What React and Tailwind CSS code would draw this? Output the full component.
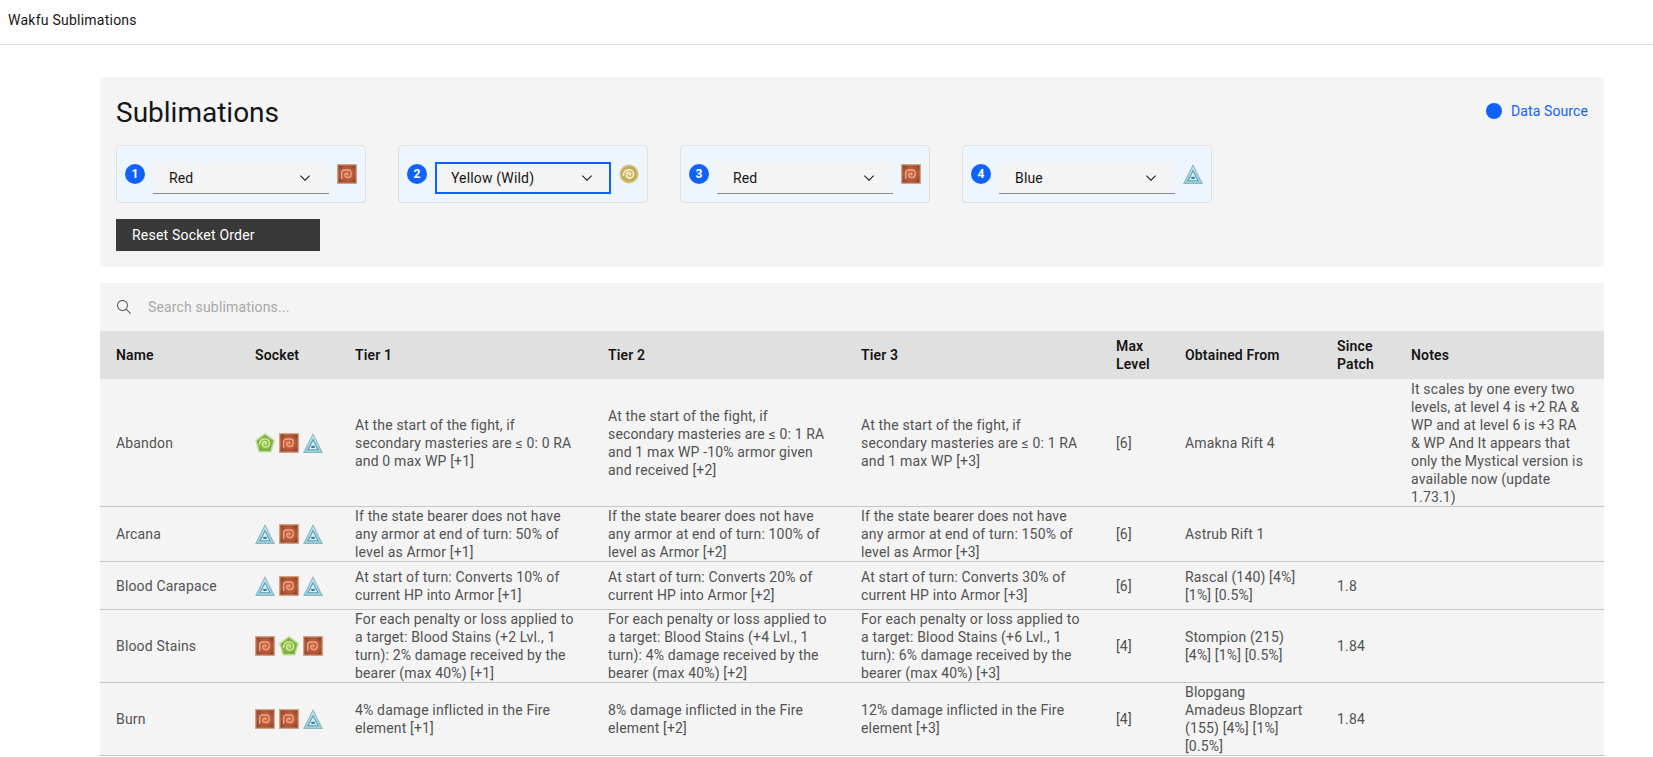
import React, { useId } from 'react';

const spiral = 'M10.400 10.800c1.100-.1 1.400-1.800.1-2.200-1.700-.4-3.200 1-3 2.700.1 1.800 1.800 3 3.600 2.800 2.200-.2 3.600-2.200 3.400-4.500C14.300 7.300 12.100 5.600 9.500 5.800 6.400 6 4.300 8.500 4.500 11.400';

const RedIcon = () => {
  const id = useId();
  return (
    <svg width="20" height="20" viewBox="0 0 20 20" className="shrink-0">
      <defs>
        <radialGradient id={id} cx="0.5" cy="0.5" r="0.72">
          <stop offset="0" stopColor="#d46a45" />
          <stop offset="0.6" stopColor="#b0553a" />
          <stop offset="1" stopColor="#7a3522" />
        </radialGradient>
      </defs>
      <rect width="20" height="20" fill="#d6a27c" />
      <rect x="1.400" y="1.400" width="17.200" height="17.200" fill={`url(#${id})`} />
      <path d="M10.200 10.800c1-.2 1-1.700-.2-1.700-1.400 0-2.300 1-2.300 2 0 1.500 1 2.400 2.500 2.400h1c2 0 3-1 3-3V9c0-2-1-3-3-3H8C6 6 4.700 7 4.700 9v5.500" fill="none" stroke="#eeaa82" strokeWidth="1.300" strokeLinecap="round" />
    </svg>
  );
};

const GreenIcon = () => {
  const id = useId();
  return (
    <svg width="20" height="20" viewBox="0 0 20 20" className="shrink-0">
      <defs>
        <radialGradient id={id} cx="0.5" cy="0.55" r="0.6">
          <stop offset="0" stopColor="#a5d05c" />
          <stop offset="1" stopColor="#6aa534" />
        </radialGradient>
      </defs>
      <polygon points="10,0 20,7.300 16.200,19.500 3.800,19.500 0,7.300" fill="#c3da96" />
      <polygon points="10,1.800 18.200,7.900 15.200,18 4.800,18 1.800,7.900" fill={`url(#${id})`} />
      <path d={spiral} fill="none" stroke="#d9efac" strokeWidth="1.300" strokeLinecap="round" />
    </svg>
  );
};

const BlueIcon = () => {
  const id = useId();
  return (
    <svg width="20" height="20" viewBox="0 0 20 20" className="shrink-0">
      <defs>
        <linearGradient id={id} x1="0" y1="0" x2="0" y2="1">
          <stop offset="0" stopColor="#c6e8f0" />
          <stop offset="1" stopColor="#98cede" />
        </linearGradient>
      </defs>
      <polygon points="10,0 20,20 0,20" fill="#8fb4be" />
      <polygon points="10,2.200 18.300,19 1.700,19" fill={`url(#${id})`} />
      <polygon points="10,6.800 15,16.700 5,16.700" fill="#d8f0f5" stroke="#5a9fb5" strokeWidth="1.100" />
      <rect x="8.300" y="12.800" width="3.400" height="2.200" fill="#3a7f98" />
    </svg>
  );
};

const YellowIcon = () => {
  const id = useId();
  return (
    <svg width="20" height="20" viewBox="0 0 20 20" className="shrink-0">
      <defs>
        <radialGradient id={id} cx="0.5" cy="0.5" r="0.5">
          <stop offset="0" stopColor="#d6c473" />
          <stop offset="0.74" stopColor="#bfaa55" />
          <stop offset="1" stopColor="#efe8c2" />
        </radialGradient>
      </defs>
      <circle cx="10" cy="10" r="10" fill={`url(#${id})`} />
      <path d={spiral} fill="none" stroke="#f6f0cf" strokeWidth="1.600" strokeLinecap="round" />
    </svg>
  );
};

const icons = { red: RedIcon, green: GreenIcon, blue: BlueIcon, yellow: YellowIcon };

const Chevron = () => (
  <svg width="16" height="16" viewBox="0 0 16 16" fill="#161616" className="absolute right-4 top-2 pointer-events-none">
    <path d="M8 11L3 6l.7-.7L8 9.600l4.300-4.300.7.700z" />
  </svg>
);

const sockets = [
  { n: 1, label: 'Red', icon: 'red' },
  { n: 2, label: 'Yellow (Wild)', icon: 'yellow', focused: true },
  { n: 3, label: 'Red', icon: 'red' },
  { n: 4, label: 'Blue', icon: 'blue' },
];

const rows = [
  {
    name: 'Abandon',
    height: 'h-[128px]',
    socket: ['green', 'red', 'blue'],
    t1: 'At the start of the fight, if\nsecondary masteries are ≤ 0: 0 RA\nand 0 max WP [+1]',
    t2: 'At the start of the fight, if\nsecondary masteries are ≤ 0: 1 RA\nand 1 max WP -10% armor given\nand received [+2]',
    t3: 'At the start of the fight, if\nsecondary masteries are ≤ 0: 1 RA\nand 1 max WP [+3]',
    max: '[6]',
    from: 'Amakna Rift 4',
    since: '',
    notes: 'It scales by one every two\nlevels, at level 4 is +2 RA &\nWP and at level 6 is +3 RA\n& WP And It appears that\nonly the Mystical version is\navailable now (update\n1.73.1)',
  },
  {
    name: 'Arcana',
    socket: ['blue', 'red', 'blue'],
    t1: 'If the state bearer does not have\nany armor at end of turn: 50% of\nlevel as Armor [+1]',
    t2: 'If the state bearer does not have\nany armor at end of turn: 100% of\nlevel as Armor [+2]',
    t3: 'If the state bearer does not have\nany armor at end of turn: 150% of\nlevel as Armor [+3]',
    max: '[6]',
    from: 'Astrub Rift 1',
    since: '',
    notes: '',
  },
  {
    name: 'Blood Carapace',
    socket: ['blue', 'red', 'blue'],
    t1: 'At start of turn: Converts 10% of\ncurrent HP into Armor [+1]',
    t2: 'At start of turn: Converts 20% of\ncurrent HP into Armor [+2]',
    t3: 'At start of turn: Converts 30% of\ncurrent HP into Armor [+3]',
    max: '[6]',
    from: 'Rascal (140) [4%]\n[1%] [0.5%]',
    since: '1.8',
    notes: '',
  },
  {
    name: 'Blood Stains',
    socket: ['red', 'green', 'red'],
    t1: 'For each penalty or loss applied to\na target: Blood Stains (+2 Lvl., 1\nturn): 2% damage received by the\nbearer (max 40%) [+1]',
    t2: 'For each penalty or loss applied to\na target: Blood Stains (+4 Lvl., 1\nturn): 4% damage received by the\nbearer (max 40%) [+2]',
    t3: 'For each penalty or loss applied to\na target: Blood Stains (+6 Lvl., 1\nturn): 6% damage received by the\nbearer (max 40%) [+3]',
    max: '[4]',
    from: 'Stompion (215)\n[4%] [1%] [0.5%]',
    since: '1.84',
    notes: '',
  },
  {
    name: 'Burn',
    socket: ['red', 'red', 'blue'],
    t1: '4% damage inflicted in the Fire\nelement [+1]',
    t2: '8% damage inflicted in the Fire\nelement [+2]',
    t3: '12% damage inflicted in the Fire\nelement [+3]',
    max: '[4]',
    from: 'Blopgang\nAmadeus Blopzart\n(155) [4%] [1%]\n[0.5%]',
    since: '1.84',
    notes: '',
  },
];

const SocketBox = ({ n, label, icon, focused }) => {
  const Icon = icons[icon];
  return (
    <div className="w-[250px] h-[58px] flex items-center gap-2 px-2 bg-[#edf5ff] border border-[#e0e0e0] rounded">
      <span className="w-5 h-5 shrink-0 rounded-full bg-[#0f62fe] text-white text-xs font-bold flex items-center justify-center">{n}</span>
      <div className="relative w-[176px] h-8 mt-2 shrink-0">
        <select
          defaultValue={label}
          className={
            focused
              ? 'appearance-none w-full h-full pl-4 bg-[#f4f4f4] text-[#161616] text-sm tracking-[0.16px] outline-2 -outline-offset-2 outline-[#0f62fe]'
              : 'appearance-none w-full h-full pl-4 bg-[#f4f4f4] text-[#161616] text-sm tracking-[0.16px] border-b border-[#8d8d8d]'
          }
        >
          <option>Red</option>
          <option>Green</option>
          <option>Blue</option>
          <option>Yellow (Wild)</option>
        </select>
        <Chevron />
      </div>
      <Icon />
    </div>
  );
};

const Cell = ({ children }) => (
  <td className="px-4 py-0 align-middle whitespace-pre-line border-b border-[#c6c6c6]">{children}</td>
);

export default function App() {
  return (
    <div className="h-screen overflow-hidden bg-white font-['Roboto',sans-serif] text-[#161616]">
      <header className="h-[45px] flex items-center px-2 border-b border-[#e0e0e0] text-sm tracking-[0.24px] pb-1">Wakfu Sublimations</header>
      <main className="ml-[100px] mr-[49px] mt-8">
        <section className="bg-[#f4f4f4] rounded p-4 mb-4">
          <div className="flex justify-between items-center mb-4 h-9">
            <h1 className="text-[28px] leading-9 font-normal mt-1">Sublimations</h1>
            <a className="flex items-center gap-[9px] text-sm text-[#0f62fe] tracking-[0.1px]">
              <span className="w-4 h-4 rounded-full bg-[#0f62fe]" />
              Data Source
            </a>
          </div>
          <div className="flex gap-8 mb-4">
            {sockets.map((s) => (
              <SocketBox key={s.n} {...s} />
            ))}
          </div>
          <button className="block w-[204px] h-8 pl-4 text-left bg-[#393939] text-white text-sm tracking-[0.2px]">Reset Socket Order</button>
        </section>

        <section className="bg-[#f4f4f4]">
          <div className="h-12 flex items-center gap-4 pl-4">
            <svg width="16" height="16" viewBox="0 0 16 16" fill="#525252" className="shrink-0">
              <path d="M15 14.300L10.700 10c1.900-2.300 1.600-5.800-.7-7.700S4.200.7 2.300 3 .7 8.800 3 10.700c2 1.700 5 1.700 7 0l4.300 4.300.7-.7zM2 6.500C2 4 4 2 6.500 2S11 4 11 6.500 9 11 6.500 11 2 9 2 6.500z" />
            </svg>
            <input placeholder="Search sublimations..." className="flex-1 bg-transparent text-sm tracking-[0.16px] outline-none placeholder:text-[#a8a8a8]" />
          </div>
          <table className="w-full table-fixed border-separate border-spacing-0 text-sm leading-[18px] tracking-[0.16px] text-[#525252]">
            <colgroup>
              <col className="w-[139px]" />
              <col className="w-[100px]" />
              <col className="w-[253px]" />
              <col className="w-[253px]" />
              <col className="w-[255px]" />
              <col className="w-[69px]" />
              <col className="w-[152px]" />
              <col className="w-[74px]" />
              <col className="w-[209px]" />
            </colgroup>
            <thead>
              <tr className="h-12 bg-[#e0e0e0] text-[#161616] text-left">
                <th className="px-4 font-semibold">Name</th>
                <th className="px-4 font-semibold">Socket</th>
                <th className="px-4 font-semibold">Tier 1</th>
                <th className="px-4 font-semibold">Tier 2</th>
                <th className="px-4 font-semibold">Tier 3</th>
                <th className="px-4 font-semibold">Max Level</th>
                <th className="px-4 font-semibold">Obtained From</th>
                <th className="px-4 font-semibold">Since Patch</th>
                <th className="px-4 font-semibold">Notes</th>
              </tr>
            </thead>
            <tbody>
              {rows.map((r) => (
                <tr key={r.name} className={r.height || 'h-12'}>
                  <Cell>{r.name}</Cell>
                  <Cell>
                    <div className="flex gap-1">
                      {r.socket.map((s, i) => {
                        const Icon = icons[s];
                        return <Icon key={i} />;
                      })}
                    </div>
                  </Cell>
                  <Cell>{r.t1}</Cell>
                  <Cell>{r.t2}</Cell>
                  <Cell>{r.t3}</Cell>
                  <Cell>{r.max}</Cell>
                  <Cell>{r.from}</Cell>
                  <Cell>{r.since}</Cell>
                  <Cell>{r.notes}</Cell>
                </tr>
              ))}
            </tbody>
          </table>
        </section>
      </main>
    </div>
  );
}
